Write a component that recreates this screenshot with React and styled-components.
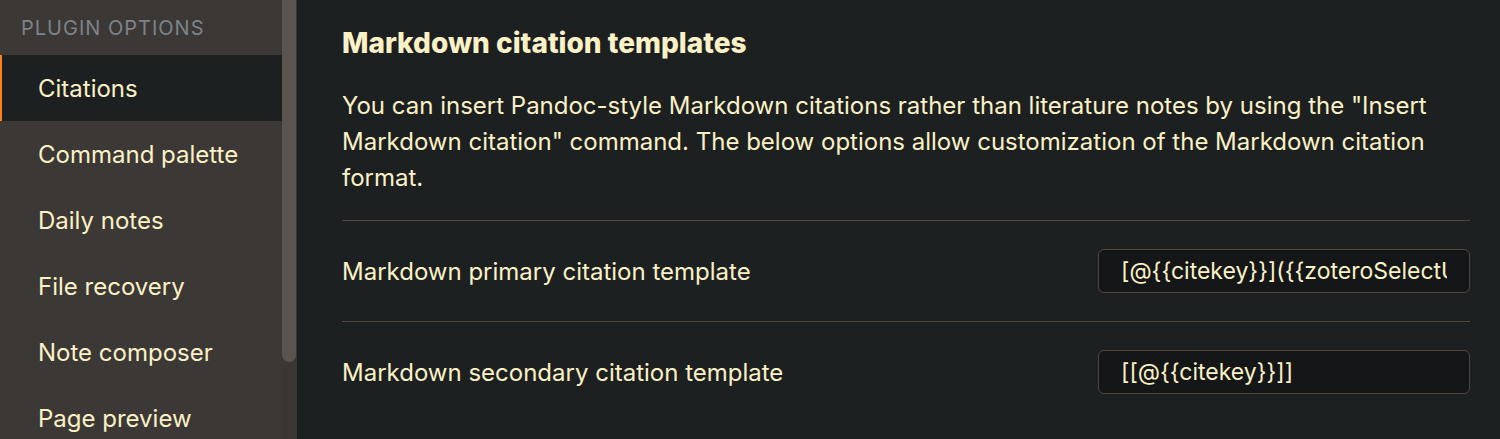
import styled, { createGlobalStyle } from "styled-components";

const GlobalStyle = createGlobalStyle`
  body {
    margin: 0;
    background-color: #1d2021;
    font-family: Inter, "Noto Sans", sans-serif;
    color: #fbf1c7;
  }
`;

const Layout = styled.div`
  display: flex;
  width: 1500px;
  height: 439px;
  overflow: hidden;
`;

const Sidebar = styled.nav`
  width: 282px;
  flex-shrink: 0;
  background-color: #3c3836;
`;

const SidebarHeader = styled.div`
  display: flex;
  align-items: center;
  height: 55px;
  padding-left: 21px;
  font-size: 20px;
  letter-spacing: 1px;
  text-transform: uppercase;
  color: #7c8389;
`;

const NavItem = styled.div`
  display: flex;
  align-items: center;
  height: 66px;
  padding-left: ${(p) => (p.$active ? "36px" : "38px")};
  font-size: 24px;
  color: #fbf1c7;
  background-color: ${(p) => (p.$active ? "#1d2021" : "transparent")};
  border-left: ${(p) => (p.$active ? "2px solid #fe8019" : "none")};
`;

const ScrollTrack = styled.div`
  width: 15px;
  flex-shrink: 0;
  background-color: #3a3634;
`;

const ScrollThumb = styled.div`
  width: 14px;
  height: 362px;
  background-color: #5a5451;
  border-radius: 0 0 7px 7px;
`;

const Main = styled.main`
  flex: 1;
  padding: 0 30px 0 45px;
`;

const Heading = styled.h2`
  margin: 0;
  padding-top: 26px;
  font-size: 28px;
  line-height: 34px;
  font-weight: 800;
`;

const Description = styled.p`
  margin: 0;
  padding: 28px 0 24px;
  font-size: 24px;
  line-height: 36px;
`;

const SettingRow = styled.div`
  display: flex;
  align-items: center;
  justify-content: space-between;
  height: 100px;
  border-top: 1px solid #4f4541;
`;

const Label = styled.div`
  font-size: 24px;
`;

const TextInput = styled.input`
  box-sizing: border-box;
  width: 372px;
  height: 44px;
  padding: 0 22px;
  background-color: #141617;
  border: 1px solid #4f4541;
  border-radius: 6px;
  font-family: Inter, "Noto Sans", sans-serif;
  font-size: 23px;
  color: #fbf1c7;
  outline: none;
`;

const navItems = [
  "Citations",
  "Command palette",
  "Daily notes",
  "File recovery",
  "Note composer",
  "Page preview",
];

const settings = [
  {
    label: "Markdown primary citation template",
    value: "[@{{citekey}}]({{zoteroSelectURI}})",
  },
  { label: "Markdown secondary citation template", value: "[[@{{citekey}}]]" },
];

export default function App() {
  return (
    <>
      <GlobalStyle />
      <Layout>
        <Sidebar>
          <SidebarHeader>Plugin options</SidebarHeader>
          {navItems.map((item, idx) => (
            <NavItem key={item} $active={idx === 0}>
              {item}
            </NavItem>
          ))}
        </Sidebar>
        <ScrollTrack>
          <ScrollThumb />
        </ScrollTrack>
        <Main>
          <Heading>Markdown citation templates</Heading>
          <Description>
            You can insert Pandoc-style Markdown citations rather than
            literature notes by using the "Insert Markdown citation" command.
            The below options allow customization of the Markdown citation
            format.
          </Description>
          {settings.map((s) => (
            <SettingRow key={s.label}>
              <Label>{s.label}</Label>
              <TextInput readOnly value={s.value} />
            </SettingRow>
          ))}
        </Main>
      </Layout>
    </>
  );
}
